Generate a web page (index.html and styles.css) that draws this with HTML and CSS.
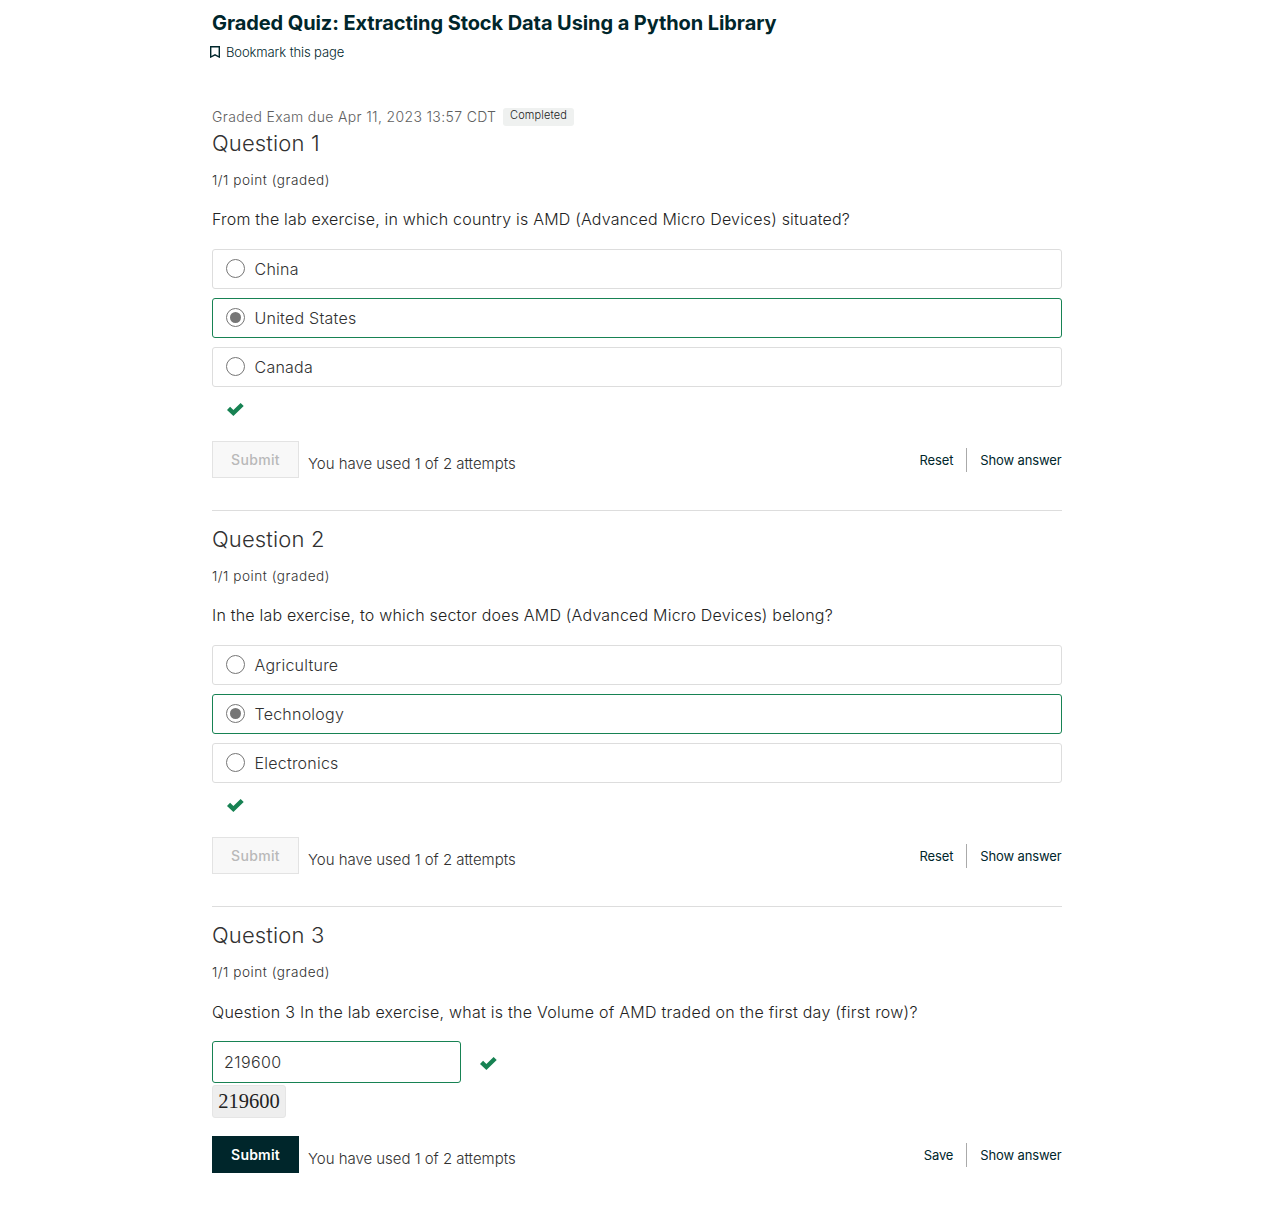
FILE: index.html
```html
<!DOCTYPE html>
<html lang="en">
<head>
<meta charset="utf-8">
<title>Graded Quiz: Extracting Stock Data Using a Python Library</title>
<link rel="stylesheet" href="styles.css">
</head>
<body>
<main class="page">
  <h1 class="title">Graded Quiz: Extracting Stock Data Using a Python Library</h1>
  <div class="bookmark"><svg class="bookmark-icon" viewBox="0 0 10 12"><path d="M.7 .7H9.3V11L5 8.8L.7 11Z"/></svg><span>Bookmark this page</span></div>
  <div class="due"><span class="due-text">Graded Exam due Apr 11, 2023 13:57 CDT</span><span class="badge">Completed</span></div>

  <section class="problem">
    <h2 class="heading">Question 1</h2>
    <div class="points">1/1 point (graded)</div>
    <p class="prompt">From the lab exercise, in which country is AMD (Advanced Micro Devices) situated?</p>
    <div class="choices">
      <label class="choice"><span class="radio"></span><span>China</span></label>
      <label class="choice correct"><span class="radio checked"></span><span>United States</span></label>
      <label class="choice"><span class="radio"></span><span>Canada</span></label>
    </div>
    <div class="status"><svg class="check" viewBox="0 0 17 13"><path d="M0 6.9L3.1 3.8L6.4 7L13.6 0L16.7 3L6.4 13Z"/></svg></div>
    <div class="actions"><button class="submit disabled">Submit</button><span class="attempts">You have used 1 of 2 attempts</span><span class="link">Reset</span><span class="link divided">Show answer</span></div>
  </section>

  <section class="problem">
    <h2 class="heading">Question 2</h2>
    <div class="points">1/1 point (graded)</div>
    <p class="prompt">In the lab exercise, to which sector does AMD (Advanced Micro Devices) belong?</p>
    <div class="choices">
      <label class="choice"><span class="radio"></span><span>Agriculture</span></label>
      <label class="choice correct"><span class="radio checked"></span><span>Technology</span></label>
      <label class="choice"><span class="radio"></span><span>Electronics</span></label>
    </div>
    <div class="status"><svg class="check" viewBox="0 0 17 13"><path d="M0 6.9L3.1 3.8L6.4 7L13.6 0L16.7 3L6.4 13Z"/></svg></div>
    <div class="actions"><button class="submit disabled">Submit</button><span class="attempts">You have used 1 of 2 attempts</span><span class="link">Reset</span><span class="link divided">Show answer</span></div>
  </section>

  <section class="problem last">
    <h2 class="heading">Question 3</h2>
    <div class="points">1/1 point (graded)</div>
    <p class="prompt numeric">Question 3 In the lab exercise, what is the Volume of AMD traded on the first day (first row)?</p>
    <div class="answer"><div class="field">219600</div><svg class="check" viewBox="0 0 17 13"><path d="M0 6.9L3.1 3.8L6.4 7L13.6 0L16.7 3L6.4 13Z"/></svg></div>
    <div class="preview">219600</div>
    <div class="actions"><button class="submit">Submit</button><span class="attempts">You have used 1 of 2 attempts</span><span class="link">Save</span><span class="link divided">Show answer</span></div>
  </section>
</main>
</body>
</html>
```
FILE: styles.css
```css
* { box-sizing: border-box; }
body { margin: 0; background: #fff; color: #313131; font-family: Inter, sans-serif; font-weight: 300; }
.page { width: 850px; margin-left: 212px; padding-top: 10px; }
.title { margin: 0; height: 26px; font-size: 20px; line-height: 26px; font-weight: 700; letter-spacing: -.09px; color: #00262b; white-space: nowrap; }
.bookmark { display: flex; align-items: center; gap: 6px; height: 20px; margin: 6px 0 0 -2px; font-size: 13px; letter-spacing: -.1px; color: #00262b; }
.bookmark-icon { width: 10px; height: 12px; fill: none; stroke: #00262b; stroke-width: 1.4; }
.due { display: flex; height: 20px; margin-top: 45px; font-size: 14px; line-height: 20px; color: #606060; }
.due-text { width: 284px; letter-spacing: .35px; white-space: nowrap; }
.badge { width: 71px; height: 18px; margin: 1px 0 0 7px; border-radius: 3px; background: #eff1f0; color: #222; font-size: 11px; line-height: 15px; letter-spacing: .1px; text-align: center; }
.problem { height: 384px; margin-bottom: 12px; border-bottom: 1px solid #ddd; }
.heading { margin: 0; padding-top: 1px; height: 31px; font-size: 22px; line-height: 31px; font-weight: 300; letter-spacing: .15px; }
.points { height: 20px; margin-top: 12px; font-size: 13.6px; line-height: 20px; letter-spacing: .52px; color: #313131; }
.prompt { margin: 17px 0 18px; height: 24px; font-size: 16px; line-height: 24px; letter-spacing: .2px; color: #222; white-space: nowrap; }
.choices { display: grid; gap: 9px; }
.choice { display: flex; align-items: center; gap: 9.5px; height: 40px; padding-left: 13px; border: 1px solid #ddd; border-radius: 3px; font-size: 16px; letter-spacing: .23px; color: #313131; }
.correct { border-color: #178253; }
.radio { display: grid; place-items: center; width: 19px; height: 19px; margin-bottom: 1px; border: 1px solid #767676; border-radius: 50%; }
.checked::after { content: ""; width: 11px; height: 11px; border-radius: 50%; background: #767676; }
.status { display: flex; height: 54px; padding: 16px 0 0 15px; }
.check { width: 17px; height: 13px; fill: #178253; }
.actions { display: flex; height: 37px; align-items: center; font-size: 13px; color: #00262b; }
.submit { width: 87px; height: 37px; padding: 0; border: 1px solid #00262b; background: #00262b; color: #fff; font: 600 14px Inter, sans-serif; letter-spacing: .2px; }
.disabled { border-color: #e3e3e3; background: #f8f8f8; color: #b9b9b9; font-weight: 500; letter-spacing: .35px; }
.attempts { flex: 1; margin-left: 9px; padding-top: 8px; font-size: 15px; letter-spacing: -.03px; color: #313131; }
.link { font-weight: 400; letter-spacing: -.12px; line-height: 23px; padding-top: 1px; }
.divided { margin-left: 13px; padding: 0 .4px 0 13px; border-left: 1px solid #aaa; line-height: 24px; }
.last { border: 0; height: 270px; margin: 0; }
.numeric { margin-top: 18px; margin-bottom: 17px; letter-spacing: .25px; }
.answer { display: flex; align-items: center; gap: 19px; height: 42px; }
.answer .check { margin-top: 2px; }
.field { width: 249px; height: 42px; padding-left: 11px; border: 1px solid #178253; border-radius: 3px; font-size: 16px; line-height: 40px; letter-spacing: .4px; }
.preview { width: 74px; height: 33px; margin: 2px 0 18px; border: 1px solid #e5e5e5; border-radius: 3px; background: #eee; color: #222; font: 20.5px/31px "Liberation Serif", serif; text-align: center; }
```
